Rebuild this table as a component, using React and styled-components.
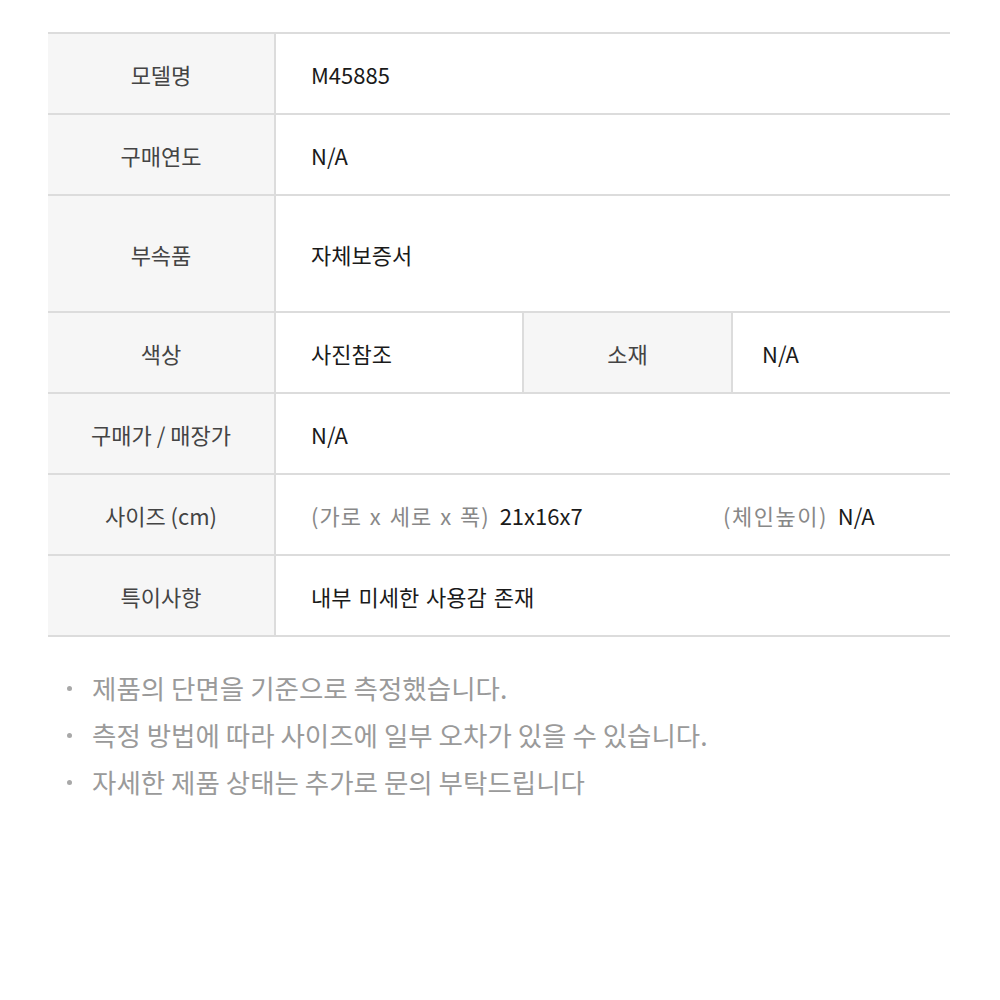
import React from "react";
import styled, { createGlobalStyle } from "styled-components";

const Global = createGlobalStyle`
  html, body { margin: 0; padding: 0; background: #fff; }
  body { font-family: "Noto Sans CJK KR", "Noto Sans", sans-serif; }
`;

const Page = styled.div`
  width: 1000px;
  padding: 32px 50px 0 48px;
  box-sizing: border-box;
`;

const Table = styled.table`
  width: 902px;
  border-collapse: collapse;
  table-layout: fixed;
  border-top: 2px solid #dcdcdc;
`;

const Row = styled.tr`
  height: ${(p) => p.$h}px;
  border-bottom: 2px solid #dcdcdc;
`;

const Label = styled.th`
  background: #f6f6f6;
  color: #444;
  font-weight: 400;
  font-size: 22px;
  text-align: center;
  vertical-align: middle;
  padding: 0;
  border-right: 2px solid #dcdcdc;
  border-left: ${(p) => (p.$inner ? "2px solid #dcdcdc" : "none")};
`;

const Value = styled.td`
  color: #1a1a1a;
  font-size: 22px;
  word-spacing: 2px;
  padding: 0 0 0 ${(p) => p.$pad || 35}px;
  vertical-align: middle;
`;

const Muted = styled.span`
  color: #888;
  letter-spacing: ${(p) => p.$ls || 1}px;
  margin-right: 3px;
`;

const SizeWrap = styled.div`
  display: flex;
  align-items: center;
`;

const SizePart = styled.div`
  width: ${(p) => p.$w}px;
  flex: none;
`;

const Notes = styled.ul`
  list-style: none;
  margin: 27px 0 0 0;
  padding: 0 0 0 16px;
`;

const Note = styled.li`
  position: relative;
  color: #9a9a9a;
  font-size: 26.5px;
  line-height: 47px;
  padding-left: 28px;
  &::before {
    content: "";
    position: absolute;
    left: 3px;
    top: 22px;
    width: 5px;
    height: 5px;
    border-radius: 50%;
    background: #a8a8a8;
  }
`;

export default function App() {
  return (
    <Page>
      <Global />
      <Table>
        <colgroup>
          <col style={{ width: 227 }} />
          <col style={{ width: 248 }} />
          <col style={{ width: 209 }} />
          <col />
        </colgroup>
        <tbody>
          <Row $h={81}>
            <Label>모델명</Label>
            <Value colSpan={3}>M45885</Value>
          </Row>
          <Row $h={81}>
            <Label>구매연도</Label>
            <Value colSpan={3}>N/A</Value>
          </Row>
          <Row $h={117}>
            <Label>부속품</Label>
            <Value colSpan={3}>자체보증서</Value>
          </Row>
          <Row $h={81}>
            <Label>색상</Label>
            <Value>사진참조</Value>
            <Label $inner>소재</Label>
            <Value $pad={29}>N/A</Value>
          </Row>
          <Row $h={81}>
            <Label>구매가 / 매장가</Label>
            <Value colSpan={3}>N/A</Value>
          </Row>
          <Row $h={81}>
            <Label>사이즈 (cm)</Label>
            <Value colSpan={3}>
              <SizeWrap>
                <SizePart $w={412}>
                  <Muted>(가로 x 세로 x 폭)</Muted> 21x16x7
                </SizePart>
                <SizePart>
                  <Muted $ls={1.5}>(체인높이)</Muted> N/A
                </SizePart>
              </SizeWrap>
            </Value>
          </Row>
          <Row $h={81}>
            <Label>특이사항</Label>
            <Value colSpan={3}>내부 미세한 사용감 존재</Value>
          </Row>
        </tbody>
      </Table>
      <Notes>
        <Note>제품의 단면을 기준으로 측정했습니다.</Note>
        <Note>측정 방법에 따라 사이즈에 일부 오차가 있을 수 있습니다.</Note>
        <Note>자세한 제품 상태는 추가로 문의 부탁드립니다</Note>
      </Notes>
    </Page>
  );
}
